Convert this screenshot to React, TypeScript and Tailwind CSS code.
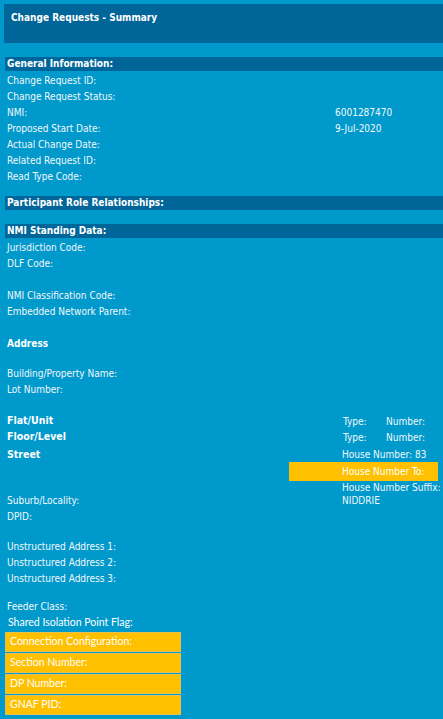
import React from "react";

const F = { fontFamily: '"DejaVu Sans Condensed", "DejaVu Sans", Verdana, sans-serif' };
const C = { fontFamily: 'Lato, "Open Sans", sans-serif' };

function Bar({ children }: { children: React.ReactNode }) {
  return (
    <div className="ml-[5px] h-[14px] bg-[#00669a] pl-[2px] text-[10px] font-bold leading-[14px] text-white">
      {children}
    </div>
  );
}

function Row({ label, value, h = "h-[16px]" }: { label?: string; value?: string; h?: string }) {
  return (
    <div className={`flex ${h} items-center whitespace-nowrap pl-[7px] text-[10px] text-[#f2f8fb]`}>
      <div className="w-[328px] shrink-0">{label}</div>
      <div>{value}</div>
    </div>
  );
}

function Yellow({ children }: { children: React.ReactNode }) {
  return (
    <div className="flex h-[20px] w-[176px] items-center border border-[#e8c050] bg-[#ffc000] pl-[4px] text-[10.5px] text-white">
      {children}
    </div>
  );
}

export default function App() {
  return (
    <div className="h-[719px] w-[443px] overflow-hidden bg-[#0099cc] pt-[4px]" style={F}>
      <div className="ml-[4px] h-[39px] bg-[#00669a] pl-[7px] pt-[6px] text-[10px] font-bold text-white">
        Change Requests - Summary
      </div>
      <div className="h-[14px]" />
      <Bar>General Information:</Bar>
      <div className="h-[1px]" />
      <Row label="Change Request ID:" />
      <Row label="Change Request Status:" />
      <Row label="NMI:" value="6001287470" />
      <Row label="Proposed Start Date:" value="9-Jul-2020" />
      <Row label="Actual Change Date:" />
      <Row label="Related Request ID:" />
      <Row label="Read Type Code:" />
      <div className="h-[12px]" />
      <Bar>Participant Role Relationships:</Bar>
      <div className="h-[14px]" />
      <Bar>NMI Standing Data:</Bar>
      <div className="h-[1px]" />
      <Row label="Jurisdiction Code:" />
      <Row label="DLF Code:" />
      <Row />
      <Row label="NMI Classification Code:" />
      <Row label="Embedded Network Parent:" />
      <Row />
      <div className="flex h-[16px] items-center pl-[7px] text-[10px] font-bold text-white">Address</div>
      <div className="h-[14px]" />
      <Row label="Building/Property Name:" />
      <Row label="Lot Number:" />
      <Row />
      <div className="flex h-[16px] items-center whitespace-nowrap pl-[7px] text-[10px] text-[#f2f8fb]">
        <div className="w-[336px] shrink-0 text-[10.5px] font-bold text-white">Flat/Unit</div>
        <div className="w-[43px] shrink-0">Type:</div>
        <div>Number:</div>
      </div>
      <div className="flex h-[16px] items-center whitespace-nowrap pl-[7px] text-[10px] text-[#f2f8fb]">
        <div className="w-[336px] shrink-0 text-[10.5px] font-bold text-white">Floor/Level</div>
        <div className="w-[43px] shrink-0">Type:</div>
        <div>Number:</div>
      </div>
      <div className="h-[2px]" />
      <div className="flex whitespace-nowrap pl-[7px] text-[10px] text-[#f2f8fb]">
        <div className="flex h-[15px] w-[282px] shrink-0 items-center text-[10.5px] font-bold text-white">Street</div>
        <div className="flex w-[149px] shrink-0 flex-col">
          <div className="flex h-[15px] items-center pl-[53px]">House Number: 83</div>
          <div className="flex h-[19px] w-[149px] items-center bg-[#ffc000] pl-[53px] text-white">House Number To:</div>
          <div className="flex h-[12px] items-center pl-[53px]">House Number Suffix:</div>
        </div>
      </div>
      <div className="flex h-[15px] items-center whitespace-nowrap pl-[7px] text-[10px] text-[#f2f8fb]">
        <div className="w-[335px] shrink-0">Suburb/Locality:</div>
        <div>NIDDRIE</div>
      </div>
      <Row label="DPID:" />
      <div className="h-[14px]" />
      <Row label="Unstructured Address 1:" />
      <Row label="Unstructured Address 2:" />
      <Row label="Unstructured Address 3:" />
      <div className="h-[12px]" />
      <Row label="Feeder Class:" />
      <div className="flex h-[18px] items-center pl-[8px] text-[10.5px] text-white" style={C}>
        Shared Isolation Point Flag:
      </div>
      <div className="ml-[5px] flex flex-col gap-[1px]" style={C}>
        <Yellow>Connection Configuration:</Yellow>
        <Yellow>Section Number:</Yellow>
        <Yellow>DP Number:</Yellow>
        <Yellow>GNAF PID:</Yellow>
      </div>
    </div>
  );
}
